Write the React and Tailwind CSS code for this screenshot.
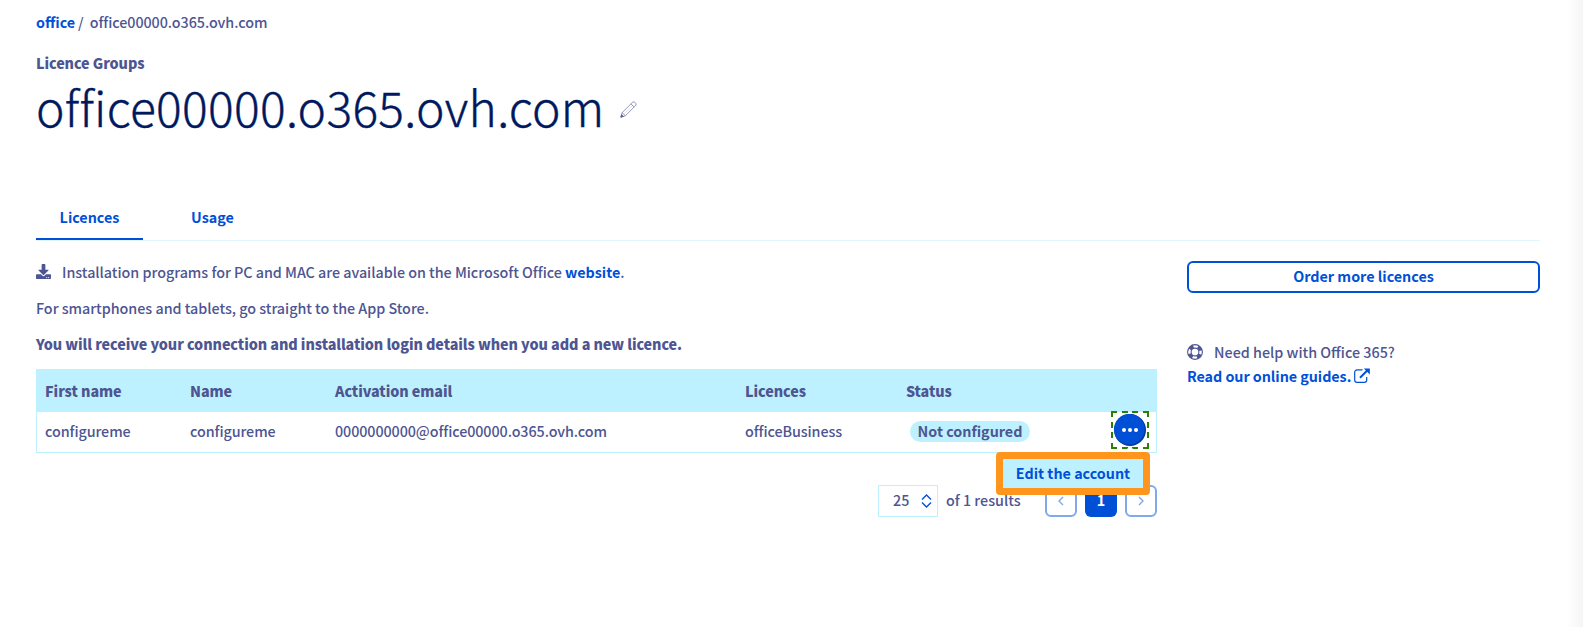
import { FaDownload } from 'react-icons/fa';

const columns = [
  { label: 'First name', value: 'configureme' },
  { label: 'Name', value: 'configureme' },
  { label: 'Activation email', value: '0000000000@office00000.o365.ovh.com' },
  { label: 'Licences', value: 'officeBusiness' },
];

const grid = 'grid grid-cols-[145px_145px_410px_161px_1fr_50px] items-center pl-2';

function PencilIcon() {
  return (
    <svg width="17" height="17" viewBox="0 0 17 17" fill="none" stroke="#4d5592" strokeWidth="0.6" className="mt-[2px]">
      <path d="M0.8 16.2 2.2 11.6 12 1.8C13 .7 14 .5 15.2 1.6 16.4 2.8 16.3 4 15.2 5L5.3 14.8Z" />
      <path d="M2.2 11.6 5.3 14.8M11 2.9 14.1 6" />
      <path d="M3.8 13.2 13 4" strokeOpacity="0.25" />
      <path d="M.8 16.2 1.6 13.6 3.4 15.4Z" fill="#4d5592" />
    </svg>
  );
}

function LifebuoyIcon() {
  return (
    <svg width="16" height="16" viewBox="0 0 16 16" fill="none" stroke="#4d5592">
      <circle cx="8" cy="8" r="7.4" strokeWidth="1.1" />
      <circle cx="8" cy="8" r="3.9" strokeWidth="1.1" />
      <circle cx="8" cy="8" r="5.7" strokeWidth="3.6" strokeDasharray="4.4 4.553" strokeDashoffset="-2.28" />
    </svg>
  );
}

function ExternalIcon() {
  return (
    <svg width="16" height="16" viewBox="0 0 16 16" fill="none" stroke="#0050d7" className="mb-px">
      <path d="M8.5 1.9H3A2.3 2.3 0 0 0 .7 4.2V12A2.3 2.3 0 0 0 3 14.3h7.4a2.3 2.3 0 0 0 2.3-2.3V9" strokeWidth="1.2" />
      <path d="M6 9.8 14 1.8" strokeWidth="2" />
      <path d="M9.8.4H15.8V6.4Z" fill="#0050d7" stroke="none" />
    </svg>
  );
}

export default function App() {
  return (
    <div className="flex h-[627px] w-full overflow-hidden bg-white font-['Noto_Sans_CJK_SC',sans-serif] text-[14.33px] leading-6 font-medium text-[#4d5592]">
      <main className="w-[1504px] ml-9 shrink-0">
        <nav className="flex h-6 mt-[10px] whitespace-pre">
          <a className="font-bold text-[#0050d7]">office</a>
          <span className="ml-[3px]">/</span>
          <span className="ml-[6px] tracking-[-0.06px]">office00000.o365.ovh.com</span>
        </nav>
        <p className="mt-[17px] h-6 font-black tracking-[-0.08px]">Licence Groups</p>
        <div className="flex h-[67px] items-center">
          <h1 className="-mt-1 w-[584px] whitespace-nowrap text-[48px] leading-[67px] font-light tracking-[0.3px] text-[#00185e] [-webkit-text-stroke:0.4px_#00185e]">
            office00000.o365.ovh.com
          </h1>
          <PencilIcon />
        </div>

        <div className="mt-[50px] flex h-[49px] border-b border-[#dff5ff] font-bold text-[#0050d7]">
          <div className="-mb-px flex h-[48px] w-[107px] justify-center border-b-2 border-[#0050d7] pt-[13px]">Licences</div>
          <div className="ml-6 w-[91px] text-center pt-[13px]">Usage</div>
        </div>

        <div className="flex">
          <section className="w-[1121px] pt-[19px]">
            <p className="flex h-6 items-center whitespace-pre">
              <FaDownload className="mr-[11px] mb-[2px] size-[15px]" />
              <span className="tracking-[-0.025px]">Installation programs for PC and MAC are available on the Microsoft Office <b className="text-[#0050d7]">website</b>.</span>
            </p>
            <p className="mt-3 h-6 tracking-[-0.025px]">For smartphones and tablets, go straight to the App Store.</p>
            <p className="mt-3 h-6 font-black tracking-[-0.068px]">You will receive your connection and installation login details when you add a new licence.</p>

            <div className="mt-[13px] border border-[#bef1ff]">
              <div className={`${grid} h-[42px] bg-[#bef1ff] pb-px font-black tracking-[-0.06px]`}>
                {columns.map((c) => <span key={c.label}>{c.label}</span>)}
                <span>Status</span>
              </div>
              <div className={`${grid} h-10`}>
                {columns.map((c) => <span key={c.label} className="-mt-0.5 tracking-[-0.08px]">{c.value}</span>)}
                <span className="ml-1 -mt-px flex h-[21px] w-[120px] items-center justify-center rounded-full bg-[#bef1ff] pb-0.5 font-bold">Not configured</span>
                <div className="relative -mt-[5px] ml-[5px] flex size-[38px] items-center justify-center">
                  <svg width="38" height="38" viewBox="0 0 38 38">
                    <path d="M1 6V1H6M32 1H37V6M37 32V37H32M6 37H1V32M11 1h6M21 1h6M11 37h6M21 37h6M1 11v6M1 21v6M37 11v6M37 21v6" fill="none" stroke="#2b8000" strokeWidth="2" />
                    <path d="M14.5 40 19 35.5 23.5 40" fill="#fff" stroke="#e6e6f0" />
                    <circle cx="19" cy="19" r="16" fill="#003a9b" />
                    <circle cx="18.3" cy="18.3" r="15.3" fill="#0050d7" />
                    <g fill="#fff"><circle cx="13" cy="19" r="2" /><circle cx="19" cy="19" r="2" /><circle cx="25" cy="19" r="2" /></g>
                  </svg>
                  <div className="absolute top-[41px] right-[-1px] z-10 flex h-[43px] w-[154px] items-center justify-center rounded-[4px] border-[7px] border-[#ff951c] bg-[#bef1ff] font-bold whitespace-nowrap text-[#0050d7]">
                    Edit the account
                  </div>
                </div>
              </div>
            </div>

            <div className="mt-8 flex h-8 items-center justify-end">
              <div className="flex h-8 w-[60px] items-center border border-[#bef1ff] pl-[14px]">
                <span className="-mt-[3px]">25</span>
                <svg width="11" height="14" viewBox="0 0 11 14" fill="none" stroke="#0050d7" strokeWidth="1.4" className="ml-3">
                  <path d="M1 5.5 5.5 1 10 5.5M1 8.5 5.5 13 10 8.5" />
                </svg>
              </div>
              <span className="ml-2 w-[99px] -mt-0.5">of 1 results</span>
              <div className="flex gap-2">
                <button className="flex size-8 items-center justify-center rounded-[6px] border-2 border-[#80a8eb]">
                  <svg width="6" height="10" viewBox="0 0 6 10" fill="none" stroke="#80a8eb" strokeWidth="1.4"><path d="M5 1 1 5 5 9" /></svg>
                </button>
                <button className="flex size-8 items-center justify-center rounded-[6px] bg-[#0050d7] pb-0.5 font-bold text-white">1</button>
                <button className="flex size-8 items-center justify-center rounded-[6px] border-2 border-[#80a8eb]">
                  <svg width="6" height="10" viewBox="0 0 6 10" fill="none" stroke="#80a8eb" strokeWidth="1.4"><path d="M1 1 5 5 1 9" /></svg>
                </button>
              </div>
            </div>
          </section>

          <aside className="ml-[30px] w-[353px] pt-5">
            <button className="flex h-8 w-full items-center justify-center rounded-[6px] border-2 border-[#0050d7] pb-0.5 font-bold text-[#0050d7]">
              Order more licences
            </button>
            <p className="mt-[47px] flex h-6 items-center gap-[11px]"><LifebuoyIcon />Need help with Office 365?</p>
            <a className="flex h-6 items-center gap-[3px] font-bold text-[#0050d7]"><span className="tracking-[-0.05px]">Read our online guides.</span><ExternalIcon /></a>
          </aside>
        </div>
      </main>
      <div className="ml-auto w-4 bg-linear-to-r from-white to-[#f5f5f5]" />
    </div>
  );
}
